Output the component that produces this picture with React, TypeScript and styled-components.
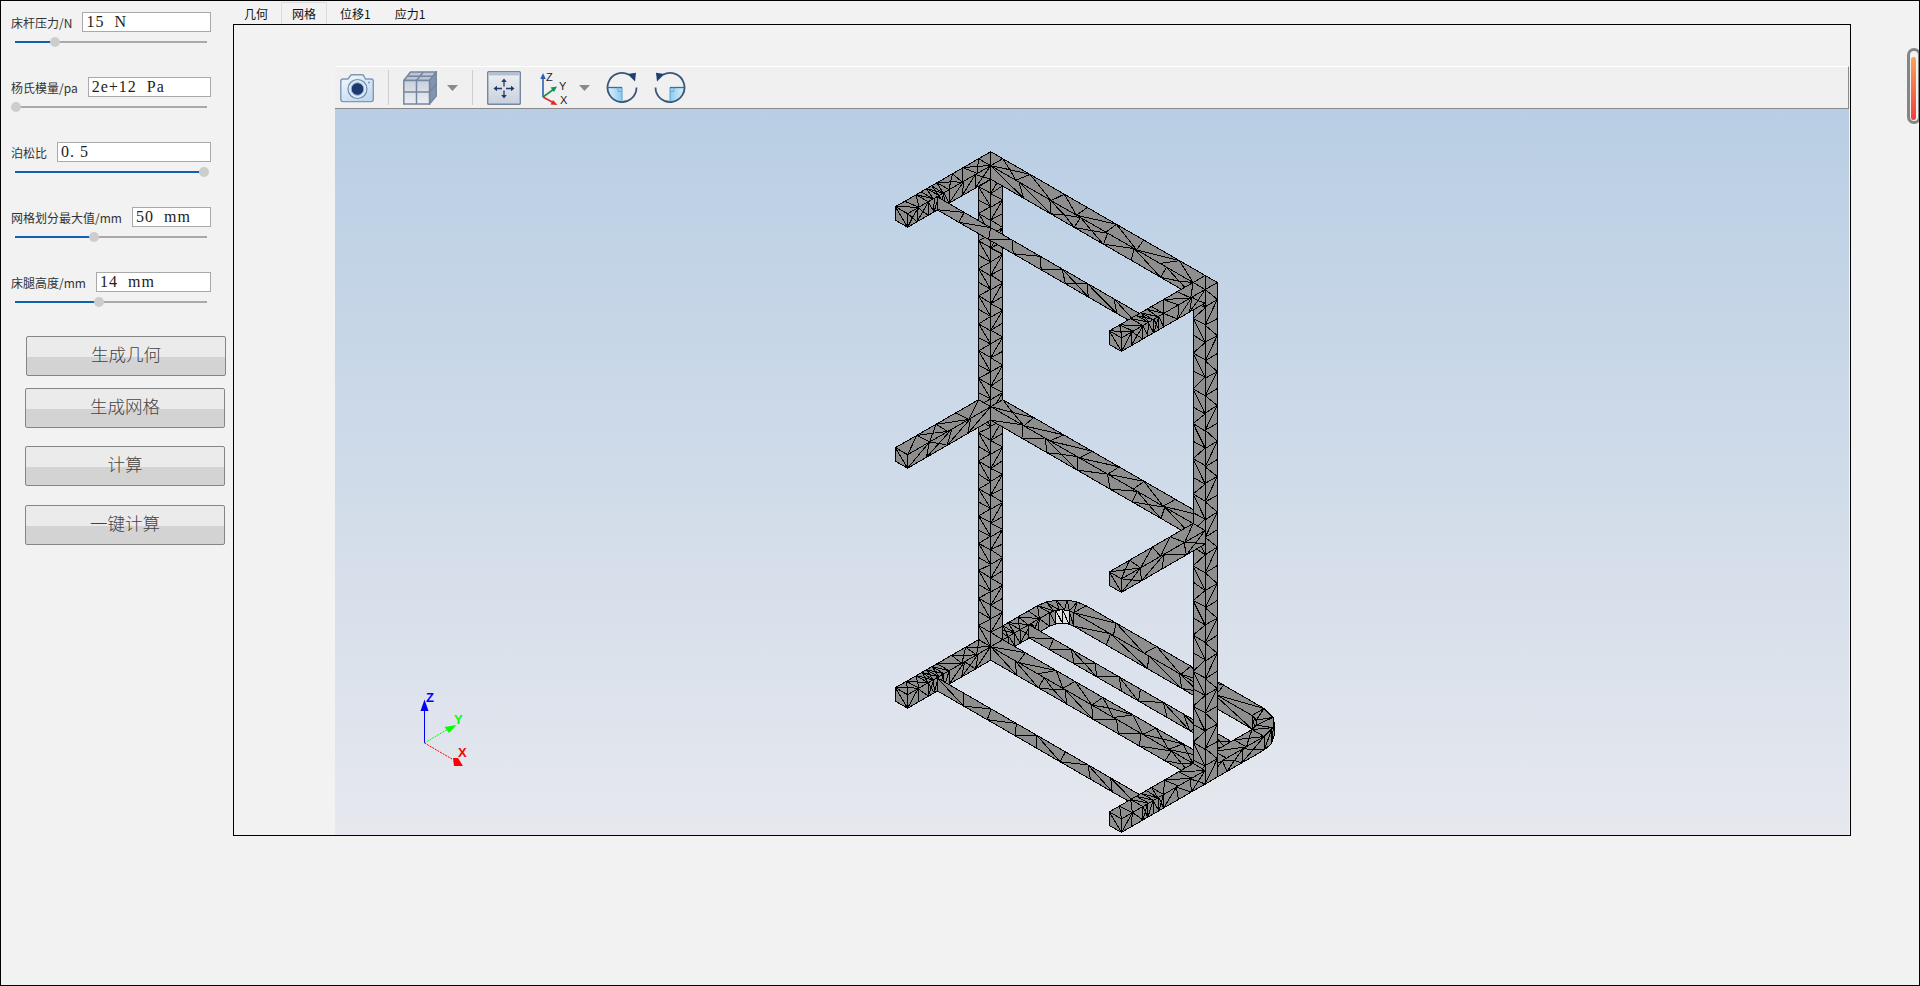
import React from "react"
import styled, { createGlobalStyle } from "styled-components"

type Pt = [number, number]
type Shape = { poly: string; lines: string; fill: string }

const GlobalStyle = createGlobalStyle`
  html, body {
    margin: 0;
    padding: 0;
    background: #f2f2f2;
    overflow: hidden;
  }
`

const fields = [
  { label: "床杆压力/N", value: "15  N", pos: 21 },
  { label: "杨氏模量/pa", value: "2e+12  Pa", pos: 0.5 },
  { label: "泊松比", value: "0. 5", pos: 98.5 },
  { label: "网格划分最大值/mm", value: "50  mm", pos: 41 },
  { label: "床腿高度/mm", value: "14  mm", pos: 44 },
]

const actions = [
  { label: "生成几何", gap: 0, shift: 15 },
  { label: "生成网格", gap: 12, shift: 14 },
  { label: "计算", gap: 18, shift: 14 },
  { label: "一键计算", gap: 19, shift: 14 },
]

const tabs = ["几何", "网格", "位移1", "应力1"]

// --- mesh model, projected the same way as the reference view ---
const ZM = -241
const ZB = -481
const H = 13.5
const L = 261.7

const P = (x: number, y: number, z: number): Pt => [
  990.7 + 0.866 * (x + y),
  151.7 + 0.5 * (x - y) - z,
]

let seed = 11
const rnd = () => {
  seed = (seed * 16807) % 2147483647
  return (seed - 1) / 2147483646
}

const mix = (a: Pt, b: Pt, t: number): Pt => [a[0] + (b[0] - a[0]) * t, a[1] + (b[1] - a[1]) * t]
const fmt = (p: Pt) => `${p[0].toFixed(1)} ${p[1].toFixed(1)}`
const seg = (a: Pt, b: Pt) => `M${fmt(a)}L${fmt(b)}`

const nodes = (a: Pt, b: Pt, n: number, jit: number) => {
  const out: Pt[] = []
  for (let i = 0; i <= n; i++) {
    const t = i === 0 || i === n ? i / n : (i + (rnd() - 0.5) * jit) / n
    out.push(mix(a, b, t))
  }
  return out
}

const strip = (a0: Pt, a1: Pt, b0: Pt, b1: Pt, n: number, jit = 0.3, fill = "#8e8e8e"): Shape => {
  const A = nodes(a0, a1, n, jit)
  const B = nodes(b0, b1, n, jit)
  let lines = ""
  for (let i = 0; i < n; i++) {
    if (i > 0) lines += seg(A[i], B[i])
    const kind = jit < 0.3 ? i % 2 : rnd()
    if (jit < 0.3 || kind < 0.7) {
      lines += kind < 0.35 ? seg(A[i], B[i + 1]) : seg(B[i], A[i + 1])
    } else {
      const c = mix(mix(A[i], B[i + 1], 0.5), mix(B[i], A[i + 1], 0.5), rnd())
      lines += seg(c, A[i]) + seg(c, B[i]) + seg(c, A[i + 1]) + seg(c, B[i + 1])
    }
  }
  return { poly: `M${fmt(a0)}L${fmt(a1)}L${fmt(b1)}L${fmt(b0)}Z`, lines, fill }
}

const xBar = (y0: number, y1: number, x0: number, x1: number, z: number, h: number, n: number) => [
  strip(P(x0, y1, z), P(x1, y1, z), P(x0, y0, z), P(x1, y0, z), n),
  strip(P(x0, y0, z), P(x1, y0, z), P(x0, y0, z - h), P(x1, y0, z - h), n),
]

// a thin rod shows as one tall face with long slivers
const rod = (y: number, z: number, n: number) =>
  strip(P(14, y, z), P(247.7, y, z), P(14, y, z - 13), P(247.7, y, z - 13), n)

const yBar = (x0: number, x1: number, y0: number, y1: number, z: number, n: number) => [
  strip(P(x0, y0, z), P(x0, y1, z), P(x1, y0, z), P(x1, y1, z), n),
  strip(P(x1, y0, z), P(x1, y1, z), P(x1, y0, z - H), P(x1, y1, z - H), n),
]

// an arm with finer cells where a rod joins it
const arm = (x0: number, x1: number, end: number, z: number) => [
  ...yBar(x0, x1, end, -86, z, 2),
  ...yBar(x0, x1, -86, -62, z, 4),
  ...yBar(x0, x1, -62, -14, z, 3),
]

const cap = (x0: number, y0: number, z: number) =>
  strip(P(x0, y0, z), P(x0 + 14, y0, z), P(x0, y0, z - H), P(x0 + 14, y0, z - H), 1, 0.1)

const upright = (x0: number, rows: number) => [
  strip(P(x0, -14, 0), P(x0, -14, ZB - H), P(x0 + 14, -14, 0), P(x0 + 14, -14, ZB - H), rows, 0.1),
  strip(P(x0 + 14, -14, 0), P(x0 + 14, -14, ZB - H), P(x0 + 14, 0, 0), P(x0 + 14, 0, ZB - H), rows, 0.1),
  strip(P(x0, 0, 0), P(x0 + 14, 0, 0), P(x0, -14, 0), P(x0 + 14, -14, 0), 1, 0),
]

const arcPt = (cx: number, cy: number, r: number, deg: number, z: number) =>
  P(cx + r * Math.cos((deg * Math.PI) / 180), cy + r * Math.sin((deg * Math.PI) / 180), z)

// one wedge row of a rounded corner of the base loop
const corner = (cx: number, cy: number, from: number, to: number, n: number): Shape[] => {
  const out: Shape[] = []
  for (let i = 0; i < n; i++) {
    const a = from + ((to - from) * i) / n
    const b = from + ((to - from) * (i + 1)) / n
    out.push(strip(arcPt(cx, cy, 28, a, ZB), arcPt(cx, cy, 28, b, ZB), arcPt(cx, cy, 14, a, ZB), arcPt(cx, cy, 14, b, ZB), 1, 0.2))
  }
  return out
}

const wall = (cx: number, cy: number, r: number, from: number, to: number, n: number, fill?: string) => {
  const out: Shape[] = []
  for (let i = 0; i < n; i++) {
    const a = from + ((to - from) * i) / n
    const b = from + ((to - from) * (i + 1)) / n
    out.push(strip(arcPt(cx, cy, r, a, ZB), arcPt(cx, cy, r, b, ZB), arcPt(cx, cy, r, a, ZB - H), arcPt(cx, cy, r, b, ZB - H), 1, 0.2, fill))
  }
  return out
}

const buildMesh = (): Shape[] => [
  // base loop, rear part
  ...wall(28, 54, 14, 180, 155, 1),
  ...wall(28, 54, 14, 155, 110, 2, "#dedede"),
  ...wall(28, 54, 14, 110, 90, 1),
  ...xBar(68, 82, 28, 233.7, ZB, H, 5),
  ...corner(28, 54, 180, 90, 5),
  ...wall(233.7, 54, 14, 90, 45, 1),
  ...wall(233.7, 54, 28, 45, 0, 2),
  ...corner(233.7, 54, 90, 0, 3),
  ...yBar(0, 14, 20, 54, ZB, 3),
  ...yBar(0, 14, -14, 20, ZB, 5),
  rod(30, ZB, 9),
  // the left upright lies behind the rails, the right one in front of them
  ...upright(0, 36),
  ...xBar(-14, 0, 14, 247.7, ZB, H, 8),
  ...xBar(-14, 0, 14, 247.7, ZM, H, 7),
  ...xBar(-14, 0, 14, 247.7, 0, H, 7),
  ...yBar(247.7, L, -14, 54, ZB, 3),
  ...upright(247.7, 28),
  // left arms
  ...arm(0, 14, -110, 0),
  ...yBar(0, 14, -110, -14, ZM, 4),
  ...arm(0, 14, -110, ZB),
  cap(0, -110, 0),
  cap(0, -110, ZM),
  cap(0, -110, ZB),
  // thin front rods
  rod(-76, 0, 8),
  rod(-76, ZB, 8),
  // right arms
  ...arm(247.7, L, -110.7, 0),
  ...yBar(247.7, L, -110.7, -14, ZM, 4),
  ...arm(247.7, L, -110.7, ZB),
  cap(247.7, -110.7, 0),
  cap(247.7, -110.7, ZM),
  cap(247.7, -110.7, ZB),
]

const mesh = buildMesh()

// --- page parts ---
const Screen = styled.div`
  box-sizing: border-box;
  position: relative;
  width: 1920px;
  height: 986px;
  display: flex;
  border: 1px solid #000;
  background: #f2f2f2;
  overflow: hidden;
  font-family: "Noto Sans CJK SC", "Liberation Sans", sans-serif;
`

const Sidebar = styled.div`
  box-sizing: border-box;
  flex: 0 0 232px;
  min-width: 0;
  padding: 11px 0 0 10px;
  display: flex;
  flex-direction: column;
`

const Fields = styled.div`
  width: 200px;
  display: flex;
  flex-direction: column;
  gap: 34px;
`

const FieldHead = styled.div`
  display: flex;
  align-items: center;
  gap: 10px;
  height: 20px;
`

const FieldLabel = styled.span`
  font-size: 12px;
  color: #333;
  white-space: nowrap;
`

const ValueBox = styled.div`
  box-sizing: border-box;
  flex: 1;
  height: 20px;
  line-height: 18px;
  padding-left: 3px;
  border: 1px solid #a9a9a9;
  background: #fff;
  font-family: "Liberation Serif", "Noto Sans CJK SC", serif;
  font-size: 16px;
  letter-spacing: 1px;
  color: #222;
  white-space: pre;
`

const Track = styled.div`
  position: relative;
  height: 2px;
  margin: 9px 4px 0;
  background: #a9a9a9;
`

const TrackFill = styled.div`
  height: 100%;
  background: #0f62b0;
`

const Thumb = styled.div`
  position: absolute;
  top: -4px;
  width: 10px;
  height: 10px;
  margin-left: -5px;
  border-radius: 50%;
  background: #cdcdcd;
`

const Actions = styled.div`
  display: flex;
  flex-direction: column;
  margin-top: 33px;
`

const ActionButton = styled.div<{ $gap: number; $shift: number }>`
  box-sizing: border-box;
  width: 200px;
  height: 40px;
  margin-top: ${(p) => p.$gap}px;
  margin-left: ${(p) => p.$shift}px;
  padding-bottom: 6px;
  border: 1px solid #858585;
  border-radius: 2px;
  background: linear-gradient(#ebebeb 0 52%, #d3d3d3 52% 100%);
  display: flex;
  align-items: center;
  justify-content: center;
  font-size: 17.5px;
  font-weight: 300;
  color: #444;
`

const Main = styled.div`
  flex: 0 0 1618px;
  padding-top: 1px;
  display: flex;
  flex-direction: column;
`

const TabBar = styled.div`
  display: flex;
  height: 22px;
  margin-left: -1px;
`

const Tab = styled.div<{ $active?: boolean }>`
  box-sizing: border-box;
  height: 22px;
  padding: 0 ${(p) => (p.$active ? 10 : 11)}px;
  margin: 0 ${(p) => (p.$active ? 1 : 0)}px;
  border: ${(p) => (p.$active ? "1px solid #dcdcdc" : "1px solid transparent")};
  border-bottom: none;
  line-height: 22px;
  font-size: 12px;
  color: #111;
  white-space: nowrap;
`

const Pane = styled.div`
  box-sizing: border-box;
  height: 812px;
  padding: 41px 1px 0 101px;
  border: 1px solid #000;
`

const Viewer = styled.div`
  height: 100%;
  display: flex;
  flex-direction: column;
`

const Toolbar = styled.div`
  box-sizing: border-box;
  flex: 0 0 43px;
  display: flex;
  align-items: center;
  padding: 0 0 0 5px;
  background: #f0f0f0;
  border-top: 1px solid #fff;
  border-right: 1px solid #8a8a8a;
  border-bottom: 1px solid #8a8a8a;
`

const ToolIcon = styled.svg<{ $left: number }>`
  display: block;
  flex: none;
  margin-left: ${(p) => p.$left}px;
`

const ToolSeparator = styled.div<{ $left: number }>`
  flex: none;
  width: 1px;
  height: 35px;
  margin-left: ${(p) => p.$left}px;
  background: #cfcfcf;
`

const View = styled.div`
  flex: 1;
  min-height: 0;
  background: linear-gradient(#b9cee4, #e6e8ee);
`

const MeshCanvas = styled.svg`
  display: block;
  width: 100%;
  height: 100%;
`

const TriadLabel = styled.text`
  font-family: "Liberation Sans", sans-serif;
  font-size: 13px;
  font-weight: 700;
`

const AxisLabel = styled.text`
  font-family: "Liberation Sans", sans-serif;
  font-size: 11px;
  fill: #222;
`

const Scrollbar = styled.div`
  position: absolute;
  top: 47px;
  left: 1906px;
  box-sizing: border-box;
  width: 14px;
  height: 76px;
  padding: 6px 2px 1px 1px;
  border: 3px solid #858585;
  border-radius: 7px;
  background: #f2f2f2;
`

const ScrollGlow = styled.div`
  width: 100%;
  height: 100%;
  border-radius: 3px;
  background: linear-gradient(#f8a458, #f23c3c);
`

// --- toolbar drawings ---
const CameraIcon = () => (
  <ToolIcon $left={0} width={34} height={30} viewBox="0 0 34 30">
    <defs>
      <linearGradient id="camBody" x1="0" y1="0" x2="0.6" y2="1">
        <stop offset="0" stopColor="#f6f9fd" />
        <stop offset="1" stopColor="#c2daf1" />
      </linearGradient>
    </defs>
    <path
      d="M3 6h5l2.500-3.500q.5-.7 1.500-.7h10q1 0 1.500.7L25.500 6h5.500a2.300 2.300 0 0 1 2.300 2.300v18a2.300 2.300 0 0 1-2.300 2.300H3A2.300 2.300 0 0 1 .8 26.300v-18A2.300 2.300 0 0 1 3 6Z"
      fill="url(#camBody)"
      stroke="#7f97b5"
      strokeWidth="1.4"
    />
    <circle cx="17.500" cy="16" r="9.500" fill="#dce8f4" stroke="#6f8cb2" strokeWidth="1.2" />
    <circle cx="17.500" cy="16" r="6.300" fill="#1d3a70" stroke="#9db4d2" strokeWidth="1" />
    <circle cx="29" cy="9.500" r="1" fill="#7f97b5" />
  </ToolIcon>
)

const CubeIcon = () => (
  <ToolIcon $left={14} width={34} height={34} viewBox="0 0 34 34">
    <defs>
      <linearGradient id="cubeFront" x1="0" y1="0" x2="0" y2="1">
        <stop offset="0" stopColor="#c9d0db" />
        <stop offset="1" stopColor="#eceef2" />
      </linearGradient>
    </defs>
    <path d="M.8 9.500 7.500 1h25.700l-6.700 8.500Z" fill="#bcc6d6" stroke="#75869f" strokeWidth="1.5" />
    <path d="M26.500 9.500 33.200 1v24l-6.700 8Z" fill="#8295af" stroke="#75869f" strokeWidth="1.5" />
    <rect x="0.800" y="9.500" width="25.700" height="23.500" fill="url(#cubeFront)" stroke="#75869f" strokeWidth="1.500" />
    <path d="M.8 21h25.700M13.500 9.500V33M4 5.200h25.700M20.300 1l-6.800 8.500M26.500 21l6.700-8" stroke="#75869f" strokeWidth="1.5" fill="none" />
  </ToolIcon>
)

const DropArrow = ({ left }: { left: number }) => (
  <ToolIcon $left={left} width={11} height={6} viewBox="0 0 11 6">
    <path d="M0 0h11L5.5 6Z" fill="#8a8a8a" />
  </ToolIcon>
)

const FitIcon = () => (
  <ToolIcon $left={14} width={34} height={34} viewBox="0 0 34 34">
    <defs>
      <linearGradient id="fitBody" x1="0" y1="0" x2="0" y2="1">
        <stop offset="0" stopColor="#eef0f3" />
        <stop offset="1" stopColor="#c8d0dc" />
      </linearGradient>
    </defs>
    <rect x="0.700" y="0.700" width="32.600" height="32.600" rx="1" fill="url(#fitBody)" stroke="#75869f" strokeWidth="1.400" />
    <rect x="1.400" y="1.400" width="31.200" height="3" fill="#b4bfd2" />
    <path d="M17 10v5.500M17 19.500V25M9 17.500h6M19 17.500h6" stroke="#1f3a68" strokeWidth="1.300" />
    <path
      d="M17 7.500l-2.800 3.500h5.600ZM17 27.500l-2.800-3.500h5.600ZM6.500 17.500l3.500-2.800v5.600ZM27.500 17.500L24 14.700v5.600Z"
      fill="#1f3a68"
    />
  </ToolIcon>
)

const AxesIcon = () => (
  <ToolIcon $left={19} width={28} height={34} viewBox="0 0 28 34">
    <path d="M3 26V7" stroke="#2d5fb4" strokeWidth="1.6" />
    <path d="M3 2 .2 8h5.6Z" fill="#2d5fb4" />
    <path d="M3 26 14 18" stroke="#1d8f50" strokeWidth="1.6" />
    <path d="M17 15.500 10.500 16.500l3.500 4.500Z" fill="#1d8f50" />
    <path d="M3 26 14 32" stroke="#e02a2a" strokeWidth="1.6" />
    <path d="M17.500 34 10.500 33.500l2.500-4.500Z" fill="#e02a2a" />
    <AxisLabel x="6" y="10">Z</AxisLabel>
    <AxisLabel x="19" y="19">Y</AxisLabel>
    <AxisLabel x="20" y="33">X</AxisLabel>
  </ToolIcon>
)

const RotateIcon = ({ id, flip, left }: { id: string; flip?: boolean; left: number }) => (
  <ToolIcon $left={left} width={32} height={33} viewBox="0 0 32 33">
    <defs>
      <linearGradient id={id} x1="0" y1="0" x2="1" y2="0">
        <stop offset="0" stopColor="#dcf0fb" />
        <stop offset="1" stopColor="#8ccdf0" />
      </linearGradient>
    </defs>
    <g transform={flip ? "matrix(-1 0 0 1 32 0)" : undefined}>
      <path d="M1.500 16.500A14.500 14.500 0 0 0 16 31V16.500Z" fill={`url(#${id})`} />
      <path d="M30.500 16.500A14.500 14.500 0 1 1 23 3.800" fill="none" stroke="#3a5578" strokeWidth="1.800" />
      <path d="M16 16.500V31" fill="none" stroke="#5b9bd0" strokeWidth="1" />
      <path d="M1.500 16.500H16" stroke="#2a6fb0" strokeWidth="1.300" />
      <path d="M12 16.500v4h4" fill="none" stroke="#7aa6cc" strokeWidth="1" />
      <path d="M21.500 3 30 1.800 29 10.500Z" fill="#1f3f70" />
    </g>
  </ToolIcon>
)

const Triad = () => (
  <g>
    <path d="M424.500 743V708" stroke="#0000ff" strokeWidth="1" />
    <path d="M424.500 699.500 428.500 711H420.500Z" fill="#0000ff" />
    <path d="M424.500 743 448 729" stroke="#00ff00" strokeWidth="1" strokeDasharray="2 1" />
    <path d="M456.500 725 449 733 444.500 727Z" fill="#00ff00" />
    <path d="M424.500 743 452 759" stroke="#ff0000" strokeWidth="1" strokeDasharray="2 1" />
    <path d="M463 766H454L453 758 458 758Z" fill="#ff0000" />
    <TriadLabel x="426" y="702" fill="#0000ff">Z</TriadLabel>
    <TriadLabel x="454" y="724" fill="#00ff00">Y</TriadLabel>
    <TriadLabel x="458" y="757" fill="#ff0000">X</TriadLabel>
  </g>
)

const MeshModel = () => (
  <MeshCanvas viewBox="335 109 1514 726" preserveAspectRatio="none">
    <g shapeRendering="crispEdges" stroke="#000" strokeWidth="1">
      {mesh.map((s, i) => (
        <g key={i}>
          <path d={s.poly} fill={s.fill} />
          <path d={s.lines} fill="none" />
        </g>
      ))}
    </g>
    <Triad />
  </MeshCanvas>
)

const App: React.FC = () => {
  return (
    <Screen>
      <GlobalStyle />
      <Sidebar>
        <Fields>
          {fields.map((f) => (
            <div key={f.label}>
              <FieldHead>
                <FieldLabel>{f.label}</FieldLabel>
                <ValueBox>{f.value}</ValueBox>
              </FieldHead>
              <Track>
                <TrackFill style={{ width: `${f.pos}%` }} />
                <Thumb style={{ left: `${f.pos}%` }} />
              </Track>
            </div>
          ))}
        </Fields>
        <Actions>
          {actions.map((a) => (
            <ActionButton key={a.label} $gap={a.gap} $shift={a.shift}>
              {a.label}
            </ActionButton>
          ))}
        </Actions>
      </Sidebar>
      <Main>
        <TabBar>
          {tabs.map((t, i) => (
            <Tab key={t} $active={i === 1}>
              {t}
            </Tab>
          ))}
        </TabBar>
        <Pane>
          <Viewer>
            <Toolbar>
              <CameraIcon />
              <ToolSeparator $left={14} />
              <CubeIcon />
              <DropArrow left={10} />
              <ToolSeparator $left={14} />
              <FitIcon />
              <AxesIcon />
              <DropArrow left={11} />
              <RotateIcon id="rotA" left={16} />
              <RotateIcon id="rotB" flip left={16} />
            </Toolbar>
            <View>
              <MeshModel />
            </View>
          </Viewer>
        </Pane>
      </Main>
      <Scrollbar>
        <ScrollGlow />
      </Scrollbar>
    </Screen>
  )
}

export default App
